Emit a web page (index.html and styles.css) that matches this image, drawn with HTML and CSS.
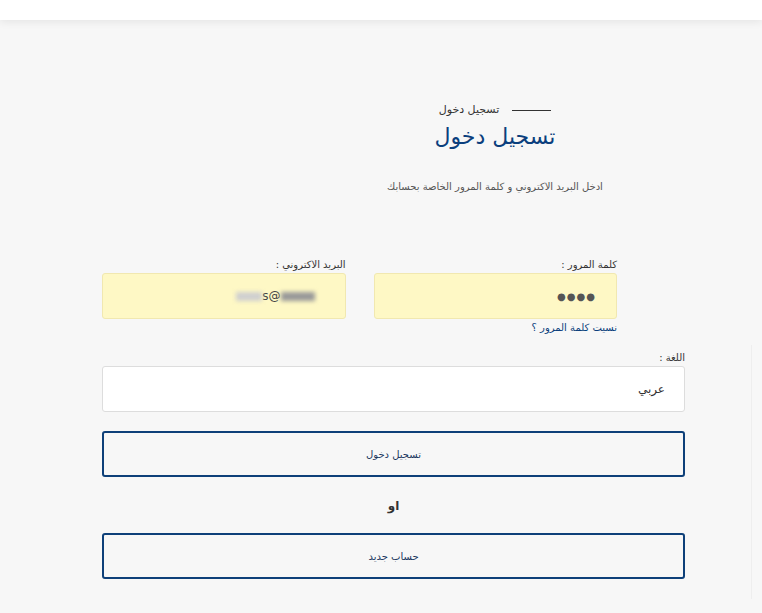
FILE: index.html
```html
<!DOCTYPE html>
<html lang="ar" dir="rtl">
<head>
    <meta charset="UTF-8">
    <meta name="viewport" content="width=device-width, initial-scale=1.0">
    <title>تسجيل دخول</title>
    <link rel="stylesheet" href="styles.css">
</head>
<body>

    <header class="topbar"></header>

    <main class="page">
        <div class="login">

            <!-- Heading -->
            <div class="heading">
                <div class="eyebrow">
                    <span class="eyebrow-line"></span>
                    <span>تسجيل دخول</span>
                </div>
                <h1>تسجيل دخول</h1>
                <p class="intro">ادخل البريد الاكتروني و كلمة المرور الخاصة بحسابك</p>
            </div>

            <!-- Credentials -->
            <div class="pair">
                <div class="field">
                    <label for="password">كلمة المرور :</label>
                    <div class="input autofill" id="password"><span class="dots">●●●●</span></div>
                    <a href="#" class="forgot">نسيت كلمة المرور ؟</a>
                </div>
                <div class="field">
                    <label for="email">البريد الاكتروني :</label>
                    <div class="input autofill" id="email">
                        <span class="masked" dir="ltr"><span class="blur light"></span>s@<span class="blur dark"></span></span>
                    </div>
                </div>
            </div>

            <!-- Language -->
            <div class="field lang">
                <label for="lang">اللغة :</label>
                <div class="input select" id="lang">عربي</div>
            </div>

            <button class="btn-outline">تسجيل دخول</button>
            <div class="or">او</div>
            <button class="btn-outline">حساب جديد</button>

        </div>
        <div class="side-edge"></div>
    </main>

</body>
</html>
```

FILE: styles.css
```css
body {
    margin: 0;
    font-family: 'DejaVu Sans', 'Noto Sans', sans-serif;
    background: #f7f7f7;
    color: #333;
}
.topbar {
    height: 20px;
    background: #fff;
    box-shadow: 0 2px 8px rgba(0, 0, 0, 0.08);
    position: relative;
}
.page {
    padding: 82px 77px 20px 102px;
    position: relative;
}
.login {
    width: 583px;
}
.heading {
    width: 244px;
    margin-right: 68px;
    text-align: center;
}
.eyebrow {
    display: flex;
    justify-content: center;
    align-items: center;
    gap: 13px;
    font-size: 11px;
    line-height: 16px;
    color: #333;
}
.eyebrow-line {
    width: 39px;
    height: 1px;
    background: #333;
}
h1 {
    margin: 2px 0 0;
    font-size: 22px;
    line-height: 34px;
    font-weight: normal;
    color: #0b3f7d;
}
.intro {
    margin: 27px 0 0;
    font-size: 10px;
    color: #555;
    white-space: nowrap;
}
.pair {
    display: flex;
    gap: 28px;
    margin: 66px 68px 0 0;
}
.pair .field {
    width: 244px;
}
.field label {
    display: block;
    font-size: 10px;
    line-height: 14px;
    margin-bottom: 1px;
    color: #333;
}
.input {
    height: 44px;
    border: 1px solid #ddd;
    border-radius: 3px;
    background: #fff;
    display: flex;
    align-items: center;
    padding: 0 20px;
    font-size: 12px;
    color: #333;
}
.autofill {
    background: #fef8c5;
    border-color: #f1e8b0;
}
.dots {
    font-size: 10px;
    letter-spacing: 1px;
    color: #555;
}
.masked {
    display: flex;
    align-items: center;
    margin-right: 10px;
    font-size: 12px;
    color: #444;
}
.blur {
    display: inline-block;
    height: 9px;
    filter: blur(2px);
}
.blur.light {
    width: 26px;
    background: #cfcfcf;
}
.blur.dark {
    width: 34px;
    background: #999;
}
.forgot {
    display: block;
    margin-top: 3px;
    font-size: 10px;
    color: #0b3f7d;
    text-decoration: none;
}
.lang {
    margin-top: 18px;
}
.select {
    padding-right: 19px;
    font-size: 12px;
}
.btn-outline {
    display: block;
    width: 100%;
    height: 46px;
    margin-top: 19px;
    background: transparent;
    border: 2px solid #0e4079;
    border-radius: 3px;
    font-family: inherit;
    font-size: 10px;
    color: #1b3760;
    cursor: pointer;
}
.or {
    text-align: center;
    font-size: 12px;
    font-weight: bold;
    line-height: 16px;
    margin: 21px 0 19px;
    color: #333;
}
.or + .btn-outline {
    margin-top: 0;
}
.side-edge {
    position: absolute;
    top: 325px;
    right: 10px;
    width: 1px;
    height: 260px;
    background: #eee;
}
```
